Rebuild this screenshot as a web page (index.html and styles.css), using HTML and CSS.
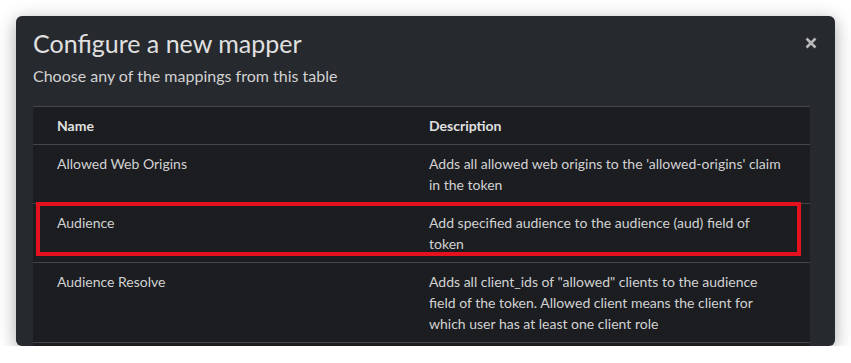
FILE: index.html
```html
<!DOCTYPE html>
<html lang="en">
<head>
    <meta charset="UTF-8">
    <meta name="viewport" content="width=device-width, initial-scale=1.0">
    <title>Configure a new mapper</title>
    <link rel="stylesheet" href="styles.css">
</head>
<body>
    <div class="modal">
        <div class="modal-header">
            <h1 class="modal-title">Configure a new mapper</h1>
            <button class="close-button" aria-label="Close">
                <svg width="12" height="12" viewBox="0 0 12 12">
                    <path d="M1.5 1.5 L10.5 10.5 M10.5 1.5 L1.5 10.5" stroke="currentColor" stroke-width="2.6" stroke-linecap="butt"/>
                </svg>
            </button>
        </div>
        <p class="modal-description">Choose any of the mappings from this table</p>
        <div class="table-wrap">
            <table class="mapper-table">
                <colgroup>
                    <col class="col-name">
                    <col class="col-desc">
                </colgroup>
                <thead>
                    <tr>
                        <th>Name</th>
                        <th>Description</th>
                    </tr>
                </thead>
                <tbody>
                    <tr>
                        <td>Allowed Web Origins</td>
                        <td>Adds all allowed web origins to the 'allowed-origins' claim in the token</td>
                    </tr>
                    <tr>
                        <td>Audience</td>
                        <td>Add specified audience to the audience (aud) field of token</td>
                    </tr>
                    <tr>
                        <td>Audience Resolve</td>
                        <td>Adds all client_ids of "allowed" clients to the audience field of the token. Allowed client means the client for which user has at least one client role</td>
                    </tr>
                    <tr class="row-empty">
                        <td></td>
                        <td></td>
                    </tr>
                </tbody>
            </table>
            <div class="highlight-box"></div>
        </div>
    </div>
</body>
</html>
```

FILE: styles.css
```css
body {
    margin: 0;
    background-color: #ffffff;
    font-family: Lato, "Open Sans", sans-serif;
    color: #e0e0e0;
}
.modal {
    margin: 16px 0 0 16px;
    width: 819px;
    height: 330px;
    box-sizing: border-box;
    padding: 10px 25px 0 17px;
    background-color: #26292d;
    border-radius: 6px;
    box-shadow: 0 4px 18px rgba(0, 0, 0, 0.35);
    overflow: hidden;
}
.modal-header {
    display: flex;
    justify-content: space-between;
    align-items: center;
}
.modal-title {
    margin: 0;
    font-size: 25px;
    font-weight: 400;
    line-height: 34px;
    color: #e0e0e0;
}
.close-button {
    background: none;
    border: none;
    padding: 0;
    margin-right: -7px;
    color: #b8b8b8;
    display: flex;
}
.modal-description {
    margin: 4px 0 18px;
    font-size: 16px;
    line-height: 24px;
    color: #d2d2d2;
}
.table-wrap {
    position: relative;
}
.mapper-table {
    width: 777px;
    border-collapse: collapse;
    table-layout: fixed;
    background-color: #1b1d21;
    font-size: 14px;
    line-height: 21px;
}
.col-name {
    width: 372px;
}
.col-desc {
    width: 405px;
}
.mapper-table th,
.mapper-table td {
    text-align: left;
    vertical-align: top;
    padding: 8px 24px;
    border-top: 1px solid #444548;
}
.mapper-table th {
    font-weight: 700;
    color: #e0e0e0;
}
.mapper-table td {
    color: #d2d2d2;
}
.row-empty td {
    height: 21px;
}
.highlight-box {
    position: absolute;
    top: 96px;
    left: 3px;
    width: 765px;
    height: 54px;
    box-sizing: border-box;
    border: 4px solid #e3121e;
}
```
